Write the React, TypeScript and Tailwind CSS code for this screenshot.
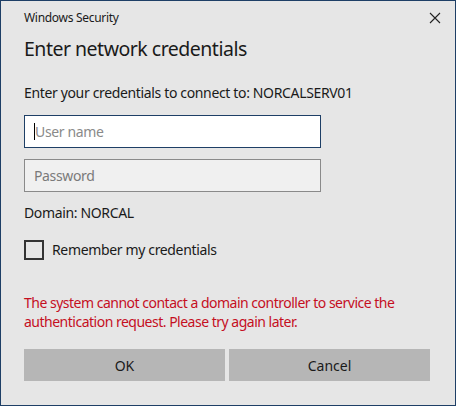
import { useState } from 'react';

export default function App() {
  const [remember, setRemember] = useState(false);

  return (
    <div
      className="w-[456px] h-[406px] bg-[#e6e6e6] border border-[#1e3f66] flex flex-col text-[#1a1a1a]"
      style={{ fontFamily: '"Noto Sans", "Open Sans", sans-serif' }}
    >
      <div className="flex items-center justify-between h-[34px] pl-[23px] pr-[14px]">
        <span className="text-[12px] tracking-[-0.3px]">Windows Security</span>
        <svg width="12" height="12" viewBox="0 0 12 12" className="text-[#222]">
          <path d="M1 1 L11 11 M11 1 L1 11" stroke="currentColor" strokeWidth="1.1" />
        </svg>
      </div>

      <div className="flex flex-col px-[23px]">
        <h1 className="text-[19.5px] leading-[28px] tracking-[-0.5px]">Enter network credentials</h1>

        <p className="text-[14px] mt-[20px] leading-[20px] tracking-[-0.35px]">
          Enter your credentials to connect to: NORCALSERV01
        </p>

        <div className="mt-[12px] w-[297px] h-[33px] border border-[#1e3f66] bg-white flex items-center pl-[9px]">
          <span className="w-px h-[17px] bg-black" />
          <span className="text-[14px] text-[#8a8a8a] tracking-[-0.35px]">User name</span>
        </div>

        <div className="mt-[11px] w-[297px] h-[33px] border border-[#8a8a8a] bg-[#f0f0f0] flex items-center pl-[9px]">
          <span className="text-[14px] text-[#7a7a7a] tracking-[-0.35px]">Password</span>
        </div>

        <p className="text-[14px] mt-[11px] leading-[20px] tracking-[-0.35px]">Domain: NORCAL</p>

        <label className="flex items-center mt-[16px] gap-[8px] cursor-pointer">
          <span
            onClick={() => setRemember(!remember)}
            className="w-[20px] h-[20px] border-2 border-[#333] flex items-center justify-center"
          >
            {remember && <span className="text-[12px]">✓</span>}
          </span>
          <span className="text-[14px] tracking-[-0.35px]">Remember my credentials</span>
        </label>

        <p className="text-[14px] text-[#c50f1f] mt-[33px] leading-[19px] tracking-[-0.5px]">
          The system cannot contact a domain controller to service the
          <br />
          authentication request. Please try again later.
        </p>

        <div className="flex gap-[4px] mt-[18px]">
          <button className="w-[201px] h-[32px] bg-[#b6b6b6] text-[14px]">OK</button>
          <button className="w-[201px] h-[32px] bg-[#b6b6b6] text-[14px]">Cancel</button>
        </div>
      </div>
    </div>
  );
}
